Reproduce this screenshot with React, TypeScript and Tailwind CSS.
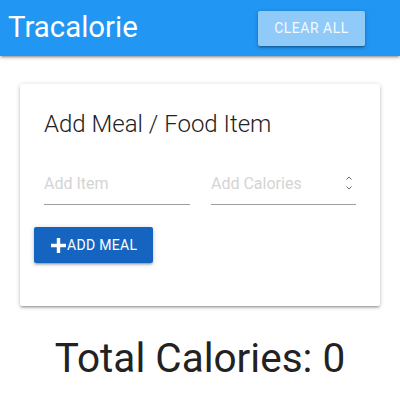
export default function App() {
  return (
    <div className="min-h-[400px] bg-white font-['Roboto',sans-serif]">
      {/* nav */}
      <nav className="flex h-14 items-center justify-between bg-[#2196f3] pl-2 pr-[35px] shadow-[0_2px_2px_0_rgba(0,0,0,0.14),0_3px_1px_-2px_rgba(0,0,0,0.12),0_1px_5px_0_rgba(0,0,0,0.2)]">
        <span className="text-[29.4px] leading-none text-white">Tracalorie</span>
        <button className="h-[35px] w-[107px] rounded-[2px] bg-[#90caf9] text-[14px] uppercase tracking-[0.5px] text-[#f4f9ff] shadow-[0_2px_2px_0_rgba(0,0,0,0.14),0_3px_1px_-2px_rgba(0,0,0,0.12),0_1px_5px_0_rgba(0,0,0,0.2)]">
          Clear All
        </button>
      </nav>

      {/* card */}
      <div className="mx-5 mt-7 rounded-[2px] bg-white px-6 pt-6 pb-[43px] shadow-[0_2px_2px_0_rgba(0,0,0,0.14),0_3px_1px_-2px_rgba(0,0,0,0.12),0_1px_5px_0_rgba(0,0,0,0.2)]">
        <h2 className="text-[24px] font-light leading-8 text-[#222]">Add Meal / Food Item</h2>
        <form className="mt-[17px]" onSubmit={(e) => e.preventDefault()}>
          <div className="flex gap-[21px]">
            <input
              type="text"
              placeholder="Add Item"
              className="h-12 w-[146px] border-b border-[#9e9e9e] pt-[6px] text-[16px] text-[#222] outline-none placeholder:text-[#d4d4d4]"
            />
            <div className="relative w-[145px]">
              <input
                type="text"
                placeholder="Add Calories"
                className="h-12 w-full border-b border-[#9e9e9e] pt-[6px] text-[16px] text-[#222] outline-none placeholder:text-[#d4d4d4]"
              />
              <svg className="absolute top-[18px] right-[3px]" width="8" height="16" viewBox="0 0 8 16" fill="none" stroke="#6b6b6b" strokeWidth="1">
                <path d="M1.5 4.5 4 2l2.5 2.5" />
                <path d="M1.5 11.5 4 14l2.5-2.5" />
              </svg>
            </div>
          </div>
          <button
            type="submit"
            className="mt-[22px] -ml-[10px] flex h-9 w-[119px] items-center rounded-[2px] bg-[#1565c0] pl-4 text-[14px] uppercase tracking-[0.3px] text-white shadow-[0_2px_2px_0_rgba(0,0,0,0.14),0_3px_1px_-2px_rgba(0,0,0,0.12),0_1px_5px_0_rgba(0,0,0,0.2)]"
          >
            <svg width="17" height="17" viewBox="0 0 17 17">
              <path d="M6.8 1h3.4v5.8H16v3.4h-5.8V16H6.8v-5.8H1V6.8h5.8z" fill="white" />
            </svg>
            Add Meal
          </button>
        </form>
      </div>

      <h3 className="mt-7 text-center text-[40.5px] leading-[48px] text-[#222]">Total Calories: 0</h3>
    </div>
  )
}
